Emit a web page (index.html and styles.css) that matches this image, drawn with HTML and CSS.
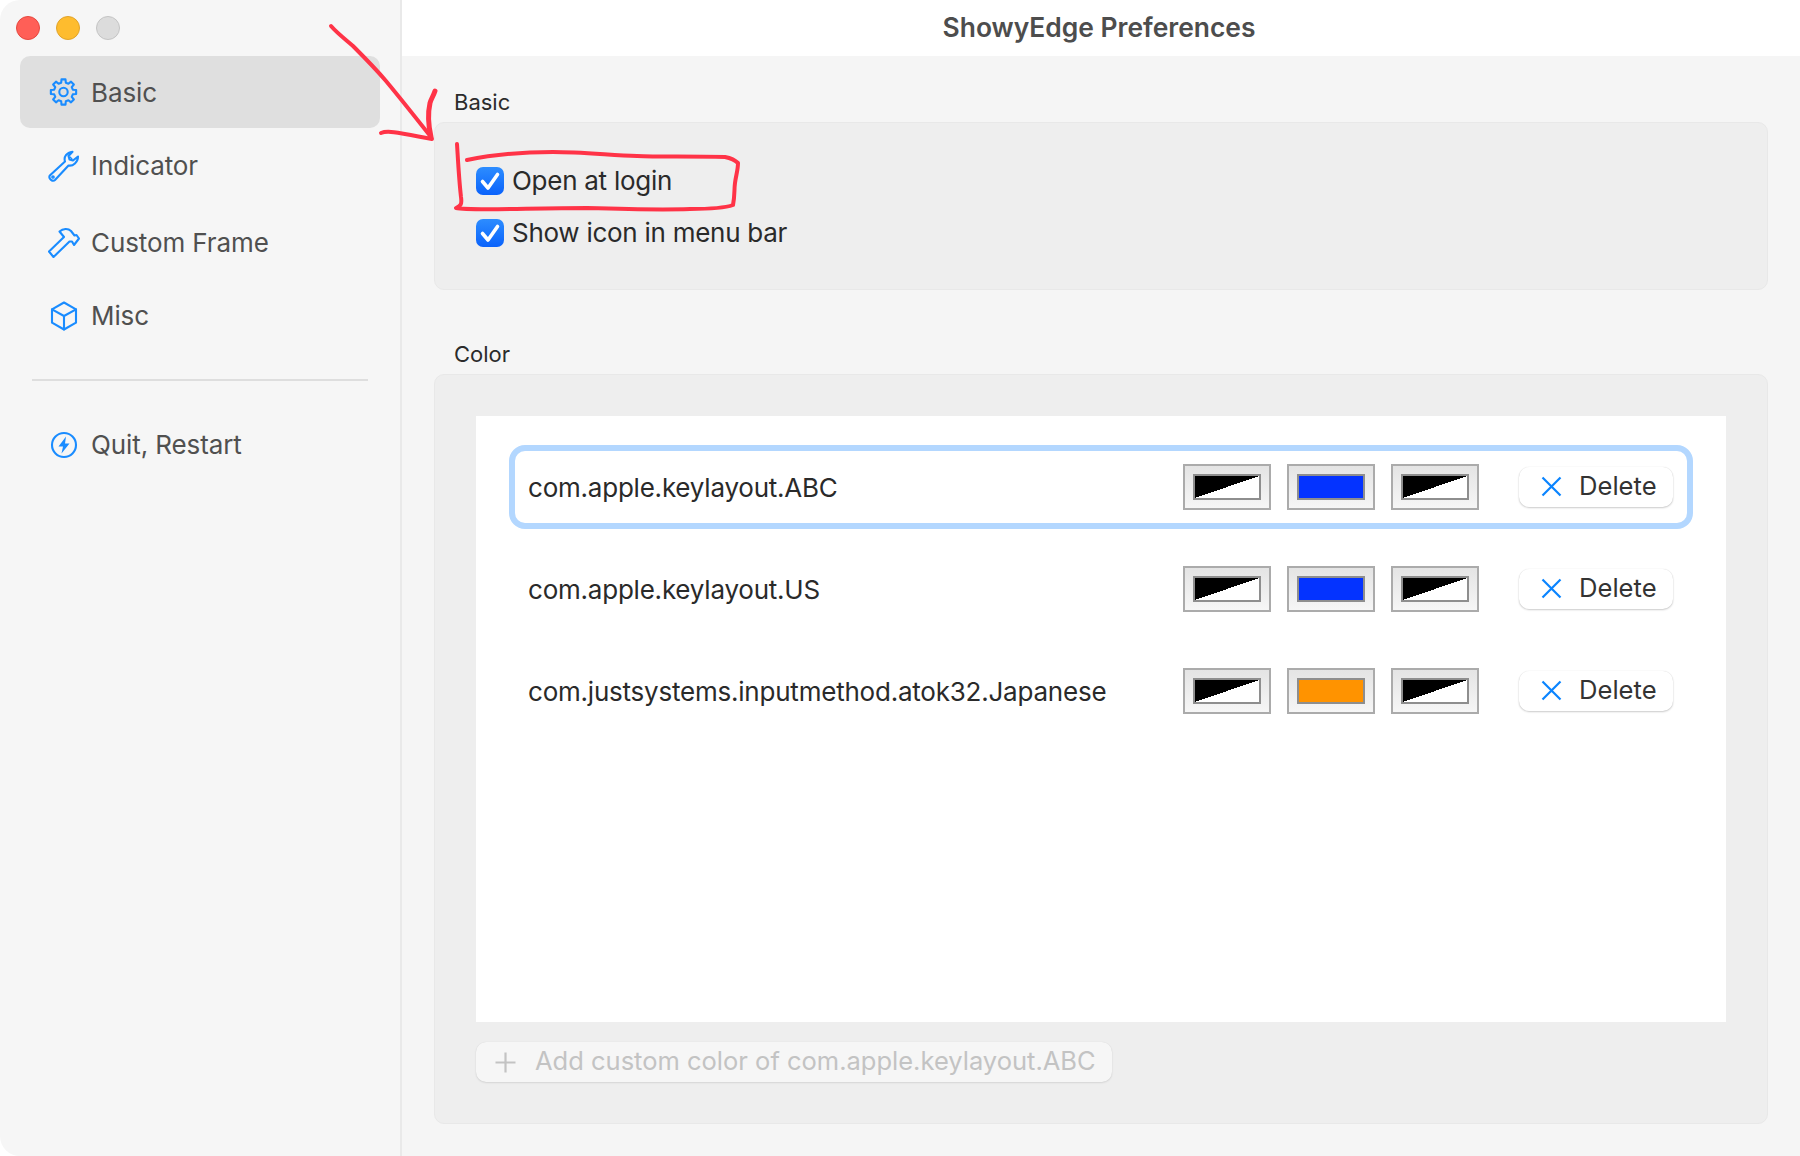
FILE: index.html
```html
<!DOCTYPE html>
<html lang="en">
<head>
<meta charset="utf-8">
<title>ShowyEdge Preferences</title>
<link rel="stylesheet" href="styles.css">
</head>
<body>
<div class="window">
  <aside class="sidebar">
    <div class="traffic">
      <span class="light red"></span>
      <span class="light yellow"></span>
      <span class="light gray"></span>
    </div>
    <nav class="nav">
      <div class="item active">
        <svg class="icon" viewBox="-15.5 -16 32 32"><path d="M-2.32 -9.31L-2 -12.64L2 -12.64L2.32 -9.31L4.94 -8.23L7.52 -10.36L10.36 -7.52L8.23 -4.94L9.31 -2.32L12.64 -2L12.64 2L9.31 2.32L8.23 4.94L10.36 7.52L7.52 10.36L4.94 8.23L2.32 9.31L2 12.64L-2 12.64L-2.32 9.31L-4.94 8.23L-7.52 10.36L-10.36 7.52L-8.23 4.94L-9.31 2.32L-12.64 2L-12.64 -2L-9.31 -2.32L-8.23 -4.94L-10.36 -7.52L-7.52 -10.36L-4.94 -8.23Z"/><circle r="4.2"/></svg>
        <span>Basic</span>
      </div>
      <div class="item">
        <svg class="icon" viewBox="0 0 32 32"><path d="M1.8 25.5L17 11.5C15.5 7 18.5 2.5 24.5 1.8L20.5 6L21.5 9.5L25 10.5L30 6.5C30 12 25 16.5 20.5 15.5L7 30C5 32 0 29 1.8 25.5Z"/><path class="thin" d="M22 7L24 9"/><circle cx="5" cy="27" r="0.8"/></svg>
        <span>Indicator</span>
      </div>
      <div class="item tall">
        <svg class="icon" viewBox="0 0 32 32"><path d="M1 25.5L16 11L11.5 5.5C15 2.5 20 2 23 5L26.5 9.5L28.5 9L31 12.5L26 19L24 15.5L21.5 15.5L5.5 31Z"/></svg>
        <span>Custom Frame</span>
      </div>
      <div class="item">
        <svg class="icon" viewBox="0 0 32 32"><path d="M16 2.5L28 9.3V22.7L16 29.5L4 22.7V9.3Z"/><path d="M4 9.3L16 16L28 9.3M16 16V29.5"/></svg>
        <span>Misc</span>
      </div>
      <hr class="divider">
      <div class="item">
        <svg class="icon" viewBox="0 0 32 32"><circle cx="16" cy="16" r="12"/><path class="solid" d="M18 7.5L10.5 17.5H15L13.5 24.5L21.5 14.5H17Z"/></svg>
        <span>Quit, Restart</span>
      </div>
    </nav>
  </aside>

  <div class="content">
    <header class="titlebar">ShowyEdge Preferences</header>
    <main class="main">
      <section class="section">
        <div class="label">Basic</div>
        <div class="panel basic">
          <div class="check-row">
            <span class="checkbox"><svg viewBox="0 0 28 28"><path d="M6.5 14.5L12 21L21.5 7.5"/></svg></span>
            <span class="check-text">Open at login</span>
          </div>
          <div class="check-row">
            <span class="checkbox"><svg viewBox="0 0 28 28"><path d="M6.5 14.5L12 21L21.5 7.5"/></svg></span>
            <span class="check-text">Show icon in menu bar</span>
          </div>
        </div>
      </section>

      <section class="section">
        <div class="label">Color</div>
        <div class="panel color">
          <div class="list">
            <div class="row focused">
              <span class="row-name">com.apple.keylayout.ABC</span>
              <div class="swatch"><span class="fill split"></span></div>
              <div class="swatch"><span class="fill blue"></span></div>
              <div class="swatch"><span class="fill split"></span></div>
              <button class="delete"><svg class="x" viewBox="0 0 21 21"><path d="M1.5 1.5L19.5 19.5M19.5 1.5L1.5 19.5"/></svg><span>Delete</span></button>
            </div>
            <div class="row">
              <span class="row-name">com.apple.keylayout.US</span>
              <div class="swatch"><span class="fill split"></span></div>
              <div class="swatch"><span class="fill blue"></span></div>
              <div class="swatch"><span class="fill split"></span></div>
              <button class="delete"><svg class="x" viewBox="0 0 21 21"><path d="M1.5 1.5L19.5 19.5M19.5 1.5L1.5 19.5"/></svg><span>Delete</span></button>
            </div>
            <div class="row">
              <span class="row-name">com.justsystems.inputmethod.atok32.Japanese</span>
              <div class="swatch"><span class="fill split"></span></div>
              <div class="swatch"><span class="fill orange"></span></div>
              <div class="swatch"><span class="fill split"></span></div>
              <button class="delete"><svg class="x" viewBox="0 0 21 21"><path d="M1.5 1.5L19.5 19.5M19.5 1.5L1.5 19.5"/></svg><span>Delete</span></button>
            </div>
          </div>
          <button class="add"><svg class="plus" viewBox="0 0 21 21"><path d="M10.5 0.5V20.5M0.5 10.5H20.5"/></svg><span>Add custom color of com.apple.keylayout.ABC</span></button>
        </div>
      </section>
    </main>
  </div>

  <svg class="annotation" viewBox="0 0 1800 1156">
    <path d="M331 26C337 33 345 39 353 46C364 57 375 68 386 81C401 99 416 118 431 137"/>
    <path d="M381 133C388 130 400 133 432 139"/>
    <path class="thick" d="M435 91C433 97 431 99 430 103C428 112 428 124 431 137"/>
    <path d="M457 144C458 160 459 180 461 197C462 204 461 206 456 208C470 211 530 208 587 208C620 209 660 210 690 209C710 209 725 208 733 205C735 195 734 190 735 183C736 175 738 170 738 163C734 159 730 158 725 157C690 156 660 157 637 156C610 155 580 152 553 152C530 152 500 153 467 160"/>
  </svg>
</div>
</body>
</html>
```

FILE: styles.css
```css
* { box-sizing: border-box; }
html, body { margin: 0; padding: 0; background: #fff; }
body { font-family: Inter, "Noto Sans", sans-serif; }

.window {
  position: relative;
  display: flex;
  width: 1800px;
  height: 1156px;
  overflow: hidden;
  border-radius: 20px 0 0 20px;
}

.sidebar {
  width: 402px;
  flex: none;
  background: #f6f6f6;
  border-right: 2px solid #e9e9e9;
  padding: 16px 20px 0;
}
.traffic { display: flex; gap: 16px; height: 40px; margin-left: -4px; }
.light { width: 24px; height: 24px; border-radius: 50%; border: 1px solid transparent; }
.red { background: #ff5f57; border-color: #e5483f; }
.yellow { background: #febc2e; border-color: #e0a32a; }
.gray { background: #dcdcdc; border-color: #c4c4c4; }

.nav { display: flex; flex-direction: column; }
.item {
  display: flex;
  align-items: center;
  gap: 11px;
  height: 72px;
  margin-bottom: 2px;
  padding-left: 28px;
  border-radius: 10px;
  font-size: 26px;
  letter-spacing: -0.1px;
  color: #505050;
}
.item span { margin-top: -2px; }
.item.active span { margin-top: 0; }
.item.tall span { margin-top: 0; }
.item.tall { height: 76px; margin-bottom: 0; }
.item.active { background: #dfdfdf; }
.icon {
  width: 32px;
  height: 32px;
  flex: none;
  fill: none;
  stroke: #1a8cff;
  stroke-width: 2.1;
  stroke-linejoin: round;
  stroke-linecap: round;
}
.icon .solid { fill: #1a8cff; stroke: none; }
.icon .thin { stroke-width: 1.2; }
.divider {
  width: 336px;
  height: 2px;
  margin: 25px 0 28px 12px;
  border: 0;
  background: #dedede;
}

.content { flex: 1; display: flex; flex-direction: column; min-width: 0; }
.titlebar {
  height: 56px;
  flex: none;
  background: #fff;
  display: flex;
  align-items: center;
  justify-content: center;
  padding: 0 4px 3px 0;
  font-size: 26.4px;
  font-weight: 600;
  color: #4d4d4d;
}
.main {
  flex: 1;
  background: #f5f5f5;
  padding: 31px 32px 0;
  display: flex;
  flex-direction: column;
  gap: 49px;
}
.label {
  height: 30px;
  margin: 0 0 5px 20px;
  display: flex;
  align-items: center;
  font-size: 22px;
  color: #2b2b2b;
}
.panel {
  background: #eeeeee;
  border: 1px solid #e8e8e8;
  border-radius: 10px;
  padding: 0 41px;
}
.panel.basic {
  height: 168px;
  padding-top: 44px;
  display: flex;
  flex-direction: column;
  gap: 24px;
}
.check-row {
  display: flex;
  align-items: center;
  gap: 8px;
  height: 28px;
  font-size: 26px;
  letter-spacing: -0.27px;
  color: #2a2a2a;
}
.check-text { margin-top: -2px; }
.checkbox {
  width: 28px;
  height: 28px;
  flex: none;
  border-radius: 7px;
  background: linear-gradient(to bottom, #2d8dff, #0a62fb);
}
.checkbox svg {
  display: block;
  width: 28px;
  height: 28px;
  fill: none;
  stroke: #fff;
  stroke-width: 3.6;
  stroke-linecap: round;
  stroke-linejoin: round;
}

.panel.color { height: 750px; padding-top: 41px; }
.list {
  height: 606px;
  background: #fff;
  padding: 29px 33px;
  display: flex;
  flex-direction: column;
  gap: 18px;
}
.row {
  height: 84px;
  display: flex;
  align-items: center;
  gap: 16px;
  padding: 0 14px 0 13px;
  border: 6px solid transparent;
  border-radius: 16px;
}
.row.focused { border-color: #b3d7ff; }
.row-name { flex: 1; font-size: 26px; letter-spacing: -0.22px; color: #2a2a2a; white-space: nowrap; }
.swatch {
  width: 88px;
  height: 46px;
  flex: none;
  padding: 8px;
  border: 2px solid #ababab;
  background: linear-gradient(to bottom, #e4e4e4, #f6f6f6);
}
.fill { display: block; width: 100%; height: 100%; border: 2px solid #8e8e8e; }
.fill.split { background: linear-gradient(to bottom right, #000 50%, #fff 50%); }
.fill.blue { background: #0433ff; }
.fill.orange { background: #ff9300; }

.delete, .add {
  display: flex;
  align-items: center;
  height: 40px;
  border: 0;
  border-radius: 10px;
  font-family: inherit;
  box-shadow: 0 1px 2px rgba(0, 0, 0, 0.2), 0 0 1px rgba(0, 0, 0, 0.15);
}
.delete span, .add span { margin-top: -4px; }
.delete {
  width: 154px;
  flex: none;
  margin-left: 24px;
  padding: 0 0 0 22px;
  gap: 17px;
  background: #fff;
  font-size: 25.6px;
  color: #333;
}
.x { width: 21px; height: 21px; flex: none; margin-top: -1px; fill: none; stroke: #0a84ff; stroke-width: 2.2; }
.add {
  margin-top: 20px;
  padding: 0 16px 0 19px;
  gap: 19px;
  background: #f6f6f6;
  font-size: 25.5px;
  color: #c3c3c3;
  box-shadow: 0 1px 2px rgba(0, 0, 0, 0.1), 0 0 1px rgba(0, 0, 0, 0.1);
}
.plus { width: 21px; height: 21px; flex: none; fill: none; stroke: #c3c3c3; stroke-width: 2.2; }

.annotation {
  position: absolute;
  inset: 0;
  width: 1800px;
  height: 1156px;
  pointer-events: none;
  fill: none;
  stroke: #ff3347;
  stroke-width: 4;
  stroke-linecap: round;
  stroke-linejoin: round;
}
.annotation .thick { stroke-width: 5; }
```
